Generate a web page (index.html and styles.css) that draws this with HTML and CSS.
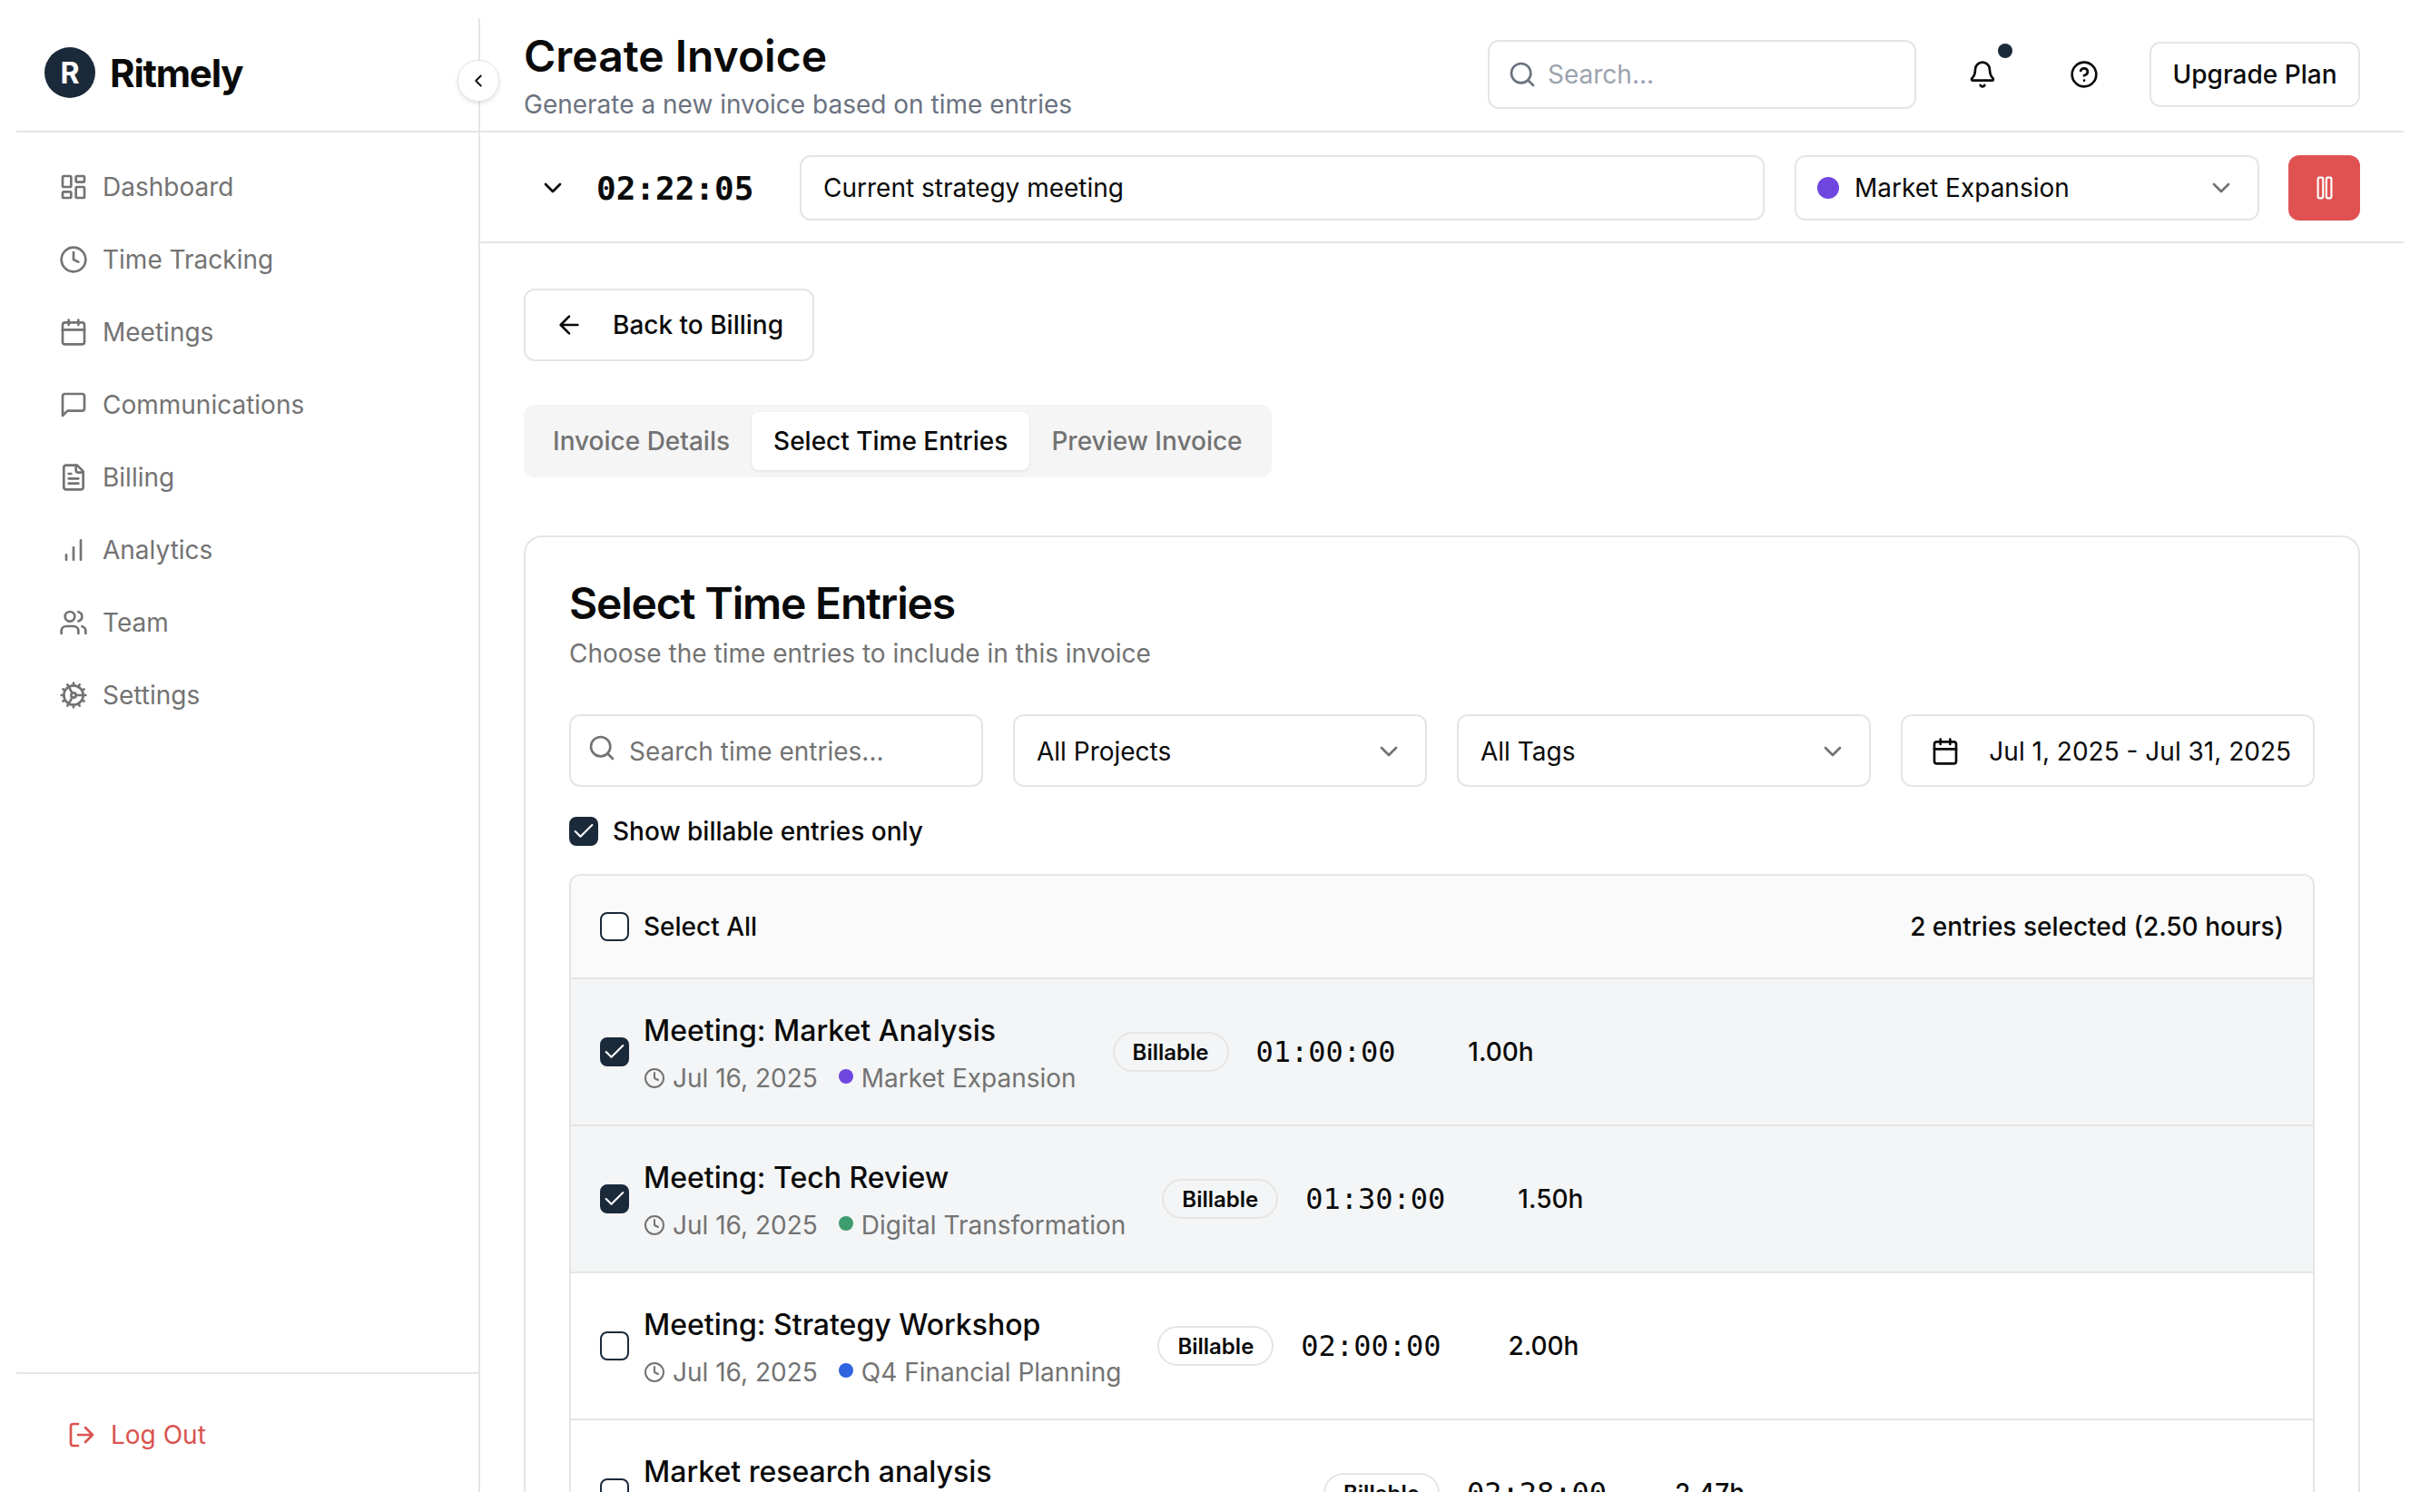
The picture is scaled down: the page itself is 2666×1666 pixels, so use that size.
FILE: index.html
```html
<!DOCTYPE html>
<html lang="en">
<head>
  <meta charset="UTF-8" />
  <title>Create Invoice - Ritmely</title>
  <link rel="stylesheet" href="styles.css">
</head>
<body>
  <svg class="sprite" xmlns="http://www.w3.org/2000/svg">
    <symbol id="i-clock" viewBox="0 0 24 24"><circle cx="12" cy="12" r="10"/><path d="M12 6v6l4 2"/></symbol>
    <symbol id="i-calendar" viewBox="0 0 24 24"><path d="M8 2v4M16 2v4"/><rect x="3" y="4" width="18" height="18" rx="2"/><path d="M3 10h18"/></symbol>
    <symbol id="i-chevron" viewBox="0 0 24 24"><path d="m6 9 6 6 6-6"/></symbol>
    <symbol id="i-search" viewBox="0 0 24 24"><circle cx="11" cy="11" r="8"/><path d="m21 21-4.3-4.3"/></symbol>
    <symbol id="i-check" viewBox="0 0 24 24"><path d="M20 6 9 17l-5-5"/></symbol>
  </svg>

  <div class="app">
    <aside class="sidebar">
      <div class="brand">
        <span class="brand-mark">R</span>
        <span class="brand-name">Ritmely</span>
      </div>
      <nav class="nav">
        <a class="nav-item"><svg class="icon" viewBox="0 0 24 24"><rect x="3" y="3" width="7" height="9" rx="1"/><rect x="14" y="3" width="7" height="5" rx="1"/><rect x="14" y="12" width="7" height="9" rx="1"/><rect x="3" y="16" width="7" height="5" rx="1"/></svg>Dashboard</a>
        <a class="nav-item"><svg class="icon"><use href="#i-clock"/></svg>Time Tracking</a>
        <a class="nav-item"><svg class="icon"><use href="#i-calendar"/></svg>Meetings</a>
        <a class="nav-item"><svg class="icon" viewBox="0 0 24 24"><path d="M21 15a2 2 0 0 1-2 2H7l-4 4V5a2 2 0 0 1 2-2h14a2 2 0 0 1 2 2z"/></svg>Communications</a>
        <a class="nav-item"><svg class="icon" viewBox="0 0 24 24"><path d="M15 2H6a2 2 0 0 0-2 2v16a2 2 0 0 0 2 2h12a2 2 0 0 0 2-2V7z"/><path d="M14 2v4a2 2 0 0 0 2 2h4M10 9H8M16 13H8M16 17H8"/></svg>Billing</a>
        <a class="nav-item"><svg class="icon" viewBox="0 0 24 24"><path d="M18 20V4M12 20V10M6 20v-4"/></svg>Analytics</a>
        <a class="nav-item"><svg class="icon" viewBox="0 0 24 24"><path d="M16 21v-2a4 4 0 0 0-4-4H6a4 4 0 0 0-4 4v2"/><circle cx="9" cy="7" r="4"/><path d="M22 21v-2a4 4 0 0 0-3-3.87M16 3.13a4 4 0 0 1 0 7.75"/></svg>Team</a>
        <a class="nav-item"><svg class="icon" viewBox="0 0 24 24"><path d="M12 20a8 8 0 1 0 0-16 8 8 0 0 0 0 16Z"/><path d="M12 14a2 2 0 1 0 0-4 2 2 0 0 0 0 4Z"/><path d="M12 2v2M12 22v-2M17 20.66l-1-1.73M11 10.27 7 3.34M20.66 17l-1.73-1M3.34 7l1.73 1M14 12h8M2 12h2M20.66 7l-1.73 1M3.34 17l1.73-1M17 3.34l-1 1.73M11 13.73l-4 6.93"/></svg>Settings</a>
      </nav>
      <div class="sidebar-foot">
        <a class="logout"><svg class="icon" viewBox="0 0 24 24"><path d="M9 21H5a2 2 0 0 1-2-2V5a2 2 0 0 1 2-2h4"/><path d="M10 12h11M16 6l6 6-6 6" transform="translate(-1 0)"/></svg>Log Out</a>
      </div>
      <button class="collapse-btn"><svg viewBox="0 0 24 24"><path d="m15 18-6-6 6-6"/></svg></button>
    </aside>

    <main class="main">
      <header class="topbar">
        <div class="page-head">
          <h1>Create Invoice</h1>
          <p>Generate a new invoice based on time entries</p>
        </div>
        <div class="top-actions">
          <div class="top-search"><svg class="icon"><use href="#i-search"/></svg>Search...</div>
          <button class="icon-btn bell">
            <svg class="icon" viewBox="0 0 24 24"><path d="M10.27 21a2 2 0 0 0 3.46 0"/><path d="M3.26 15.33A1 1 0 0 0 4 17h16a1 1 0 0 0 .74-1.67C19.41 13.96 18 12.5 18 8A6 6 0 0 0 6 8c0 4.5-1.41 5.96-2.74 7.33"/></svg>
            <span class="bell-dot"></span>
          </button>
          <button class="icon-btn help">
            <svg class="icon" viewBox="0 0 24 24"><circle cx="12" cy="12" r="10"/><path d="M9.09 9a3 3 0 0 1 5.83 1c0 2-3 3-3 3M12 17h.01"/></svg>
          </button>
          <button class="btn upgrade">Upgrade Plan</button>
        </div>
      </header>

      <div class="timer-bar">
        <svg class="icon timer-toggle"><use href="#i-chevron"/></svg>
        <span class="timer-clock">02:22:05</span>
        <div class="field timer-task">Current strategy meeting</div>
        <div class="field timer-project">
          <span class="dot dot-lg purple"></span>Market Expansion
          <svg class="icon chevron"><use href="#i-chevron"/></svg>
        </div>
        <button class="pause-btn"><svg viewBox="0 0 24 24"><rect x="6.45" y="3.5" width="4.2" height="17" rx="1"/><rect x="13.35" y="3.5" width="4.2" height="17" rx="1"/></svg></button>
      </div>

      <div class="content">
        <button class="btn back-btn"><svg class="icon" viewBox="0 0 24 24"><path d="m12 19-7-7 7-7M19 12H5"/></svg>Back to Billing</button>

        <div class="tabs">
          <span class="tab">Invoice Details</span>
          <span class="tab active">Select Time Entries</span>
          <span class="tab">Preview Invoice</span>
        </div>

        <section class="card">
          <h2>Select Time Entries</h2>
          <p class="card-sub">Choose the time entries to include in this invoice</p>

          <div class="filters">
            <div class="field filter-search"><svg class="icon"><use href="#i-search"/></svg>Search time entries...</div>
            <div class="field">All Projects<svg class="icon chevron"><use href="#i-chevron"/></svg></div>
            <div class="field">All Tags<svg class="icon chevron"><use href="#i-chevron"/></svg></div>
            <div class="field filter-date"><svg class="icon"><use href="#i-calendar"/></svg>Jul 1, 2025 - Jul 31, 2025</div>
          </div>

          <label class="billable-only">
            <span class="check on"><svg><use href="#i-check"/></svg></span>Show billable entries only
          </label>

          <div class="entries">
            <div class="entries-head">
              <label class="select-all"><span class="check"></span>Select All</label>
              <span>2 entries selected (2.50 hours)</span>
            </div>

            <div class="entry selected">
              <span class="check on"><svg><use href="#i-check"/></svg></span>
              <div class="entry-info">
                <div class="entry-title">Meeting: Market Analysis</div>
                <div class="entry-meta"><svg class="icon"><use href="#i-clock"/></svg><span class="entry-date">Jul 16, 2025</span><span class="dot purple"></span>Market Expansion</div>
              </div>
              <span class="badge">Billable</span>
              <span class="entry-time">01:00:00</span>
              <span class="entry-hours">1.00h</span>
            </div>

            <div class="entry selected">
              <span class="check on"><svg><use href="#i-check"/></svg></span>
              <div class="entry-info">
                <div class="entry-title">Meeting: Tech Review</div>
                <div class="entry-meta"><svg class="icon"><use href="#i-clock"/></svg><span class="entry-date">Jul 16, 2025</span><span class="dot green"></span>Digital Transformation</div>
              </div>
              <span class="badge">Billable</span>
              <span class="entry-time">01:30:00</span>
              <span class="entry-hours">1.50h</span>
            </div>

            <div class="entry">
              <span class="check"></span>
              <div class="entry-info">
                <div class="entry-title">Meeting: Strategy Workshop</div>
                <div class="entry-meta"><svg class="icon"><use href="#i-clock"/></svg><span class="entry-date">Jul 16, 2025</span><span class="dot blue"></span>Q4 Financial Planning</div>
              </div>
              <span class="badge">Billable</span>
              <span class="entry-time">02:00:00</span>
              <span class="entry-hours">2.00h</span>
            </div>

            <div class="entry">
              <span class="check"></span>
              <div class="entry-info entry-info-wide">
                <div class="entry-title">Market research analysis</div>
                <div class="entry-meta"><svg class="icon"><use href="#i-clock"/></svg><span class="entry-date">Jul 16, 2025</span><span class="dot purple"></span>Market Expansion</div>
              </div>
              <span class="badge">Billable</span>
              <span class="entry-time">02:28:00</span>
              <span class="entry-hours">2.47h</span>
            </div>
          </div>
        </section>
      </div>
    </main>
  </div>
</body>
</html>
```

FILE: styles.css
```css
* { box-sizing: border-box; }

html, body {
  height: 100%;
}
body {
  margin: 0;
  padding: 20px 18px 22px;
  background: #fff;
  color: #0a0a0a;
  font-family: Inter, "Noto Sans", sans-serif;
  font-size: 28px;
  overflow: hidden;
}
.sprite { display: none; }

.icon {
  width: 32px;
  height: 32px;
  flex-shrink: 0;
  fill: none;
  stroke: currentColor;
  stroke-width: 2;
  stroke-linecap: round;
  stroke-linejoin: round;
}

.app {
  display: flex;
  height: 100%;
  overflow: hidden;
}

/* sidebar */
.sidebar {
  position: relative;
  width: 511px;
  flex-shrink: 0;
  display: flex;
  flex-direction: column;
  border-right: 2px solid #e5e5e5;
}
.brand {
  height: 126px;
  display: flex;
  align-items: center;
  gap: 16px;
  padding: 0 0 4px 31px;
  border-bottom: 2px solid #e5e5e5;
}
.brand-mark {
  width: 56px;
  height: 56px;
  border-radius: 50%;
  background: #1b2a3a;
  color: #fff;
  font-size: 32px;
  font-weight: 700;
  display: flex;
  align-items: center;
  justify-content: center;
}
.brand-name {
  font-size: 42px;
  font-weight: 700;
  letter-spacing: -1.2px;
}
.nav {
  flex: 1;
  display: flex;
  flex-direction: column;
  gap: 16px;
  padding-top: 28px;
}
.nav-item {
  height: 64px;
  display: flex;
  align-items: center;
  gap: 16px;
  padding-left: 47px;
  color: #737373;
}
.sidebar-foot {
  height: 132px;
  border-top: 2px solid #e5e5e5;
  padding: 50px 0 0 56px;
}
.logout {
  display: flex;
  align-items: center;
  gap: 16px;
  color: #d9534f;
}
.collapse-btn {
  position: absolute;
  top: 46px;
  right: -23px;
  width: 46px;
  height: 46px;
  padding: 11px;
  border: 1px solid #e5e5e5;
  border-radius: 50%;
  background: #fff;
  box-shadow: 0 2px 5px rgba(0,0,0,0.12);
  z-index: 2;
}
.collapse-btn svg {
  display: block;
  fill: none;
  stroke: #0a0a0a;
  stroke-width: 2;
  stroke-linecap: round;
  stroke-linejoin: round;
}

/* top */
.main {
  flex: 1;
  min-width: 0;
  overflow: hidden;
}
.topbar {
  height: 126px;
  display: flex;
  align-items: center;
  justify-content: space-between;
  padding: 0 48px;
  border-bottom: 2px solid #e5e5e5;
}
.page-head { padding-top: 5px; }
.page-head h1 {
  margin: 0;
  font-size: 48px;
  line-height: 60px;
  font-weight: 600;
}
.page-head p {
  margin: 0;
  line-height: 46px;
  color: #6b7280;
}
.top-actions {
  display: flex;
  align-items: center;
}
.top-search {
  width: 472px;
  height: 76px;
  display: flex;
  align-items: center;
  gap: 12px;
  padding-left: 20px;
  border: 2px solid #e5e5e5;
  border-radius: 12px;
  color: #9ca3af;
}
.top-search .icon { color: #6b7280; }
.icon-btn {
  position: relative;
  width: 32px;
  height: 32px;
  padding: 0;
  border: 0;
  background: none;
  color: #0a0a0a;
}
.bell { margin-left: 57px; }
.help { margin-left: 80px; margin-right: 56px; }
.bell-dot {
  position: absolute;
  top: -18px;
  right: -17px;
  width: 16px;
  height: 16px;
  border-radius: 50%;
  background: #1b2a3a;
}
.btn {
  font: inherit;
  font-weight: 500;
  color: #0a0a0a;
  background: #fff;
  border: 2px solid #e5e5e5;
  border-radius: 12px;
}
.upgrade {
  width: 232px;
  height: 72px;
  padding: 0;
}

/* running timer */
.timer-bar {
  height: 122px;
  display: flex;
  align-items: center;
  padding: 2px 48px 0 64px;
  border-bottom: 2px solid #e5e5e5;
}
.timer-toggle { margin-right: 32px; }
.timer-clock {
  width: 224px;
  font-family: "DejaVu Sans Mono", "Liberation Mono", monospace;
  font-size: 36px;
  font-weight: 700;
}
.field {
  height: 80px;
  display: flex;
  align-items: center;
  padding: 0 24px;
  border: 2px solid #e5e5e5;
  border-radius: 12px;
  background: #fff;
}
.field .chevron {
  margin-left: auto;
  color: #737373;
}
.timer-task {
  width: 1063px;
  height: 72px;
  margin-right: 33px;
}
.timer-project {
  width: 512px;
  height: 72px;
  margin-right: 32px;
}
.dot {
  width: 16px;
  height: 16px;
  border-radius: 50%;
  flex-shrink: 0;
}
.dot-lg {
  width: 24px;
  height: 24px;
  margin: 0 17px 0 -1px;
}
.purple { background: #6f46e0; }
.green { background: #3f9c6e; }
.blue { background: #2f64e0; }
.pause-btn {
  width: 79px;
  height: 72px;
  padding: 20px 23.5px;
  border: 0;
  border-radius: 12px;
  background: #e05252;
}
.pause-btn svg {
  display: block;
  fill: none;
  stroke: #fff;
  stroke-width: 1.6;
}

/* page body */
.content {
  padding: 50px 48px 0;
}
.back-btn {
  width: 320px;
  height: 80px;
  display: flex;
  align-items: center;
  gap: 32px;
  padding: 0 0 0 32px;
}
.tabs {
  display: inline-flex;
  margin-top: 48px;
  padding: 8px;
  background: #f5f5f5;
  border-radius: 12px;
  vertical-align: top;
}
.tab {
  height: 64px;
  padding: 0 24px;
  display: flex;
  align-items: center;
  font-weight: 500;
  color: #737373;
  border-radius: 8px;
}
.tab.active {
  background: #fff;
  color: #0a0a0a;
  box-shadow: 0 1px 3px rgba(0,0,0,0.1);
}
.card {
  margin-top: 64px;
  padding: 45px 48px 0;
  border: 2px solid #e5e5e5;
  border-radius: 20px;
}
.card h2 {
  margin: 0;
  font-size: 48px;
  line-height: 56px;
  font-weight: 600;
  letter-spacing: -1.2px;
}
.card-sub {
  margin: 5px 0 0;
  line-height: 44px;
  color: #737373;
}
.filters {
  display: grid;
  grid-template-columns: repeat(4, 1fr);
  gap: 33px;
  margin-top: 45px;
}
.filters .field { padding-top: 2px; }
.filter-search {
  gap: 14px;
  padding-left: 18px;
  color: #737373;
}
.filter-search .icon { margin-bottom: 8px; }
.filter-date {
  gap: 32px;
  justify-content: flex-end;
  white-space: nowrap;
}

.check {
  width: 32px;
  height: 32px;
  flex-shrink: 0;
  display: inline-block;
  border: 2px solid #1b2a3a;
  border-radius: 8px;
  background: #fff;
}
.check.on { background: #1b2a3a; }
.check svg {
  display: block;
  width: 100%;
  height: 100%;
  fill: none;
  stroke: #fff;
  stroke-width: 1.8;
  stroke-linecap: round;
  stroke-linejoin: round;
}
.billable-only {
  display: flex;
  align-items: center;
  gap: 16px;
  margin-top: 32px;
  font-weight: 500;
}
.entries {
  margin-top: 30px;
  border: 2px solid #e5e5e5;
  border-radius: 12px 12px 0 0;
}
.entries-head {
  height: 114px;
  display: flex;
  align-items: center;
  justify-content: space-between;
  padding: 0 32px;
  background: #fafafa;
  border-bottom: 2px solid #e5e5e5;
  border-radius: 12px 12px 0 0;
  font-weight: 500;
}
.select-all {
  display: flex;
  align-items: center;
  gap: 16px;
}
.entry {
  height: 162px;
  display: flex;
  align-items: center;
  padding: 0 32px;
  border-bottom: 2px solid #e5e5e5;
}
.entry.selected { background: #f3f5f6; }
.entry > .check { margin-right: 16px; }
.entry-info { padding-top: 5px; }
.entry-title {
  font-size: 32px;
  line-height: 40px;
  font-weight: 500;
  white-space: nowrap;
}
.entry-meta {
  display: flex;
  align-items: center;
  margin-top: 12px;
  line-height: 40px;
  color: #737373;
  white-space: nowrap;
}
.entry-meta .icon {
  width: 24px;
  height: 24px;
  margin-right: 8px;
}
.entry-date { margin-right: 23px; }
.entry-meta .dot {
  margin-right: 9px;
  margin-bottom: 4px;
}
.entry-info-wide { width: 709px; }
.badge {
  margin-left: 40px;
  height: 44px;
  padding: 0 20px;
  display: flex;
  align-items: center;
  border: 2px solid #e5e5e5;
  border-radius: 22px;
  font-size: 24px;
  font-weight: 600;
}
.entry-time {
  margin-left: 30px;
  font-family: "DejaVu Sans Mono", "Liberation Mono", monospace;
  font-size: 32px;
}
.entry-hours {
  width: 152px;
  text-align: right;
  font-weight: 500;
}
```
